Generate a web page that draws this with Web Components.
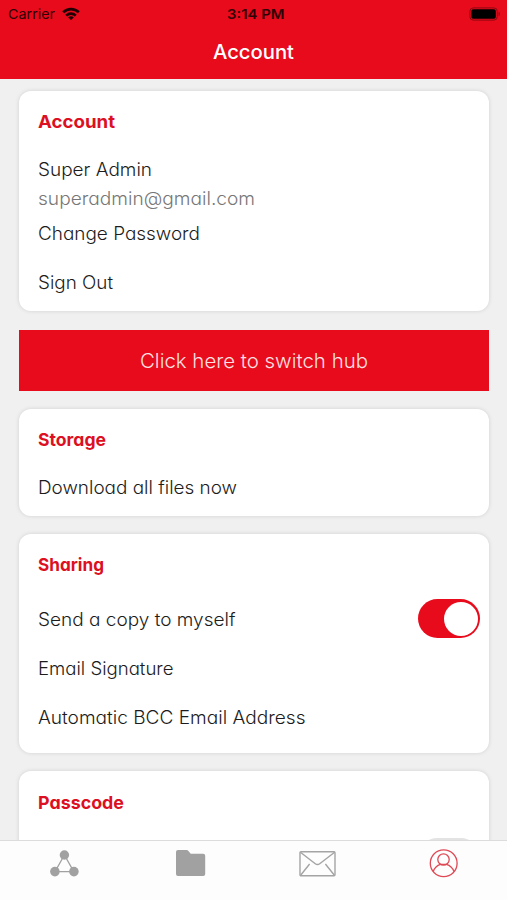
<!DOCTYPE html>
<html lang="en">

<head>
  <meta charset="UTF-8">
  <meta name="viewport" content="width=device-width, initial-scale=1.0">
  <title>Account</title>
  <style>
    body {
      margin: 0;
      overflow: hidden;
      font-family: Inter, "Liberation Sans", sans-serif;
    }
  </style>
</head>

<body>
  <template id="account-screen">
    <style>
      :host {
        --red: #e80b1c;
        display: flex;
        flex-direction: column;
        height: 900px;
        background: #f0f0f0;
      }
      main {
        flex: 1;
        min-height: 0;
        overflow: hidden;
        display: flex;
        flex-direction: column;
        gap: 18px;
        padding: 12px 18px 0 19px;
      }
    </style>
    <slot name="top"></slot>
    <main><slot></slot></main>
    <slot name="bottom"></slot>
  </template>

  <template id="nav-header">
    <style>
      :host {
        display: block;
        height: 79px;
        background: var(--red);
      }
      .status {
        display: grid;
        grid-template-columns: 1fr auto 1fr;
        align-items: center;
        height: 28px;
        padding: 0 7px 0 8px;
        font-size: 13.6px;
        color: #300006;
      }
      .left {
        display: flex;
        align-items: center;
        gap: 7px;
      }
      .time {
        font-weight: 600;
        margin-left: 3px;
      }
      .battery {
        justify-self: end;
        display: block;
      }
      .title {
        display: flex;
        justify-content: center;
        padding-top: 11px;
        color: #fff;
        font-size: 20px;
        font-weight: 500;
        line-height: 26px;
      }
    </style>
    <div class="status">
      <div class="left">
        <fit-text width="47">Carrier</fit-text>
        <svg width="18" height="14" viewBox="0 0 18 14" fill="none" stroke="#200004" stroke-width="2.7">
          <path d="M1.2 5.3a11.2 11.2 0 0 1 15.6 0M4.2 8.6a6.9 6.9 0 0 1 9.6 0" />
          <path d="M9 13 6.2 10.5a3.9 3.9 0 0 1 5.6 0z" fill="#200004" stroke="none" />
        </svg>
      </div>
      <fit-text class="time" width="57.5">3:14 PM</fit-text>
      <svg class="battery" width="31" height="14" viewBox="0 0 31 14">
        <rect x=".9" y=".9" width="27.4" height="12.2" rx="3.4" fill="none" stroke="#8d0711" />
        <rect x="2.4" y="2.3" width="24.4" height="9.4" rx="1.8" fill="#000" />
        <path d="M29.6 4.8c1.8.7 1.8 3.7 0 4.4z" fill="#8d0711" />
      </svg>
    </div>
    <div class="title"><fit-text width="81"><slot></slot></fit-text></div>
  </template>

  <template id="settings-card">
    <style>
      :host {
        display: block;
        flex: none;
        box-sizing: border-box;
        padding: 19px 9px 0 18.5px;
        border-radius: 12px;
        background: #fff;
        box-shadow: 0 0 4px rgba(0, 0, 0, .13);
      }
      .heading {
        display: flex;
        height: 23px;
        color: #dc1022;
        font-size: 18px;
        font-weight: 700;
        line-height: 24px;
      }
    </style>
    <div class="heading"><slot name="heading"></slot></div>
    <slot></slot>
  </template>

  <template id="settings-row">
    <style>
      :host {
        display: flex;
        align-items: center;
        color: #1c1c1c;
        font-size: 18.3px;
        font-weight: 300;
        line-height: 24px;
      }
      :host([muted]) {
        color: #777;
      }
      ::slotted([slot="control"]) {
        margin-left: auto;
      }
    </style>
    <slot></slot>
    <slot name="control"></slot>
  </template>

  <template id="toggle-switch">
    <style>
      :host {
        display: flex;
        box-sizing: border-box;
        width: 62px;
        height: 39px;
        padding: 2.5px;
        border-radius: 20px;
        background: #e3e3e3;
      }
      :host([on]) {
        justify-content: flex-end;
        background: var(--red);
      }
      i {
        width: 34px;
        height: 34px;
        border-radius: 50%;
        background: #fff;
      }
    </style>
    <i></i>
  </template>

  <template id="hub-button">
    <style>
      :host {
        display: flex;
        align-items: center;
        justify-content: center;
        flex: none;
        box-sizing: border-box;
        height: 61px;
        margin-top: 1px;
        padding-top: 1px;
        background: var(--red);
        color: #ffe0e2;
        font-size: 19.6px;
        font-weight: 300;
      }
    </style>
    <slot></slot>
  </template>

  <template id="tab-bar">
    <style>
      :host {
        display: grid;
        grid-template-columns: repeat(4, 1fr);
        box-sizing: border-box;
        height: 60px;
        padding-top: 6px;
        border-top: 1px solid #dcdcdc;
        background: #fdfdfd;
      }
      svg {
        display: block;
        margin: 0 auto;
      }
    </style>
    <svg width="38" height="32" viewBox="0 0 38 32" fill="#a1a1a1">
      <path d="M20.4 8 11 24.6h18.8z" fill="none" stroke="#a1a1a1" stroke-width="1.3" />
      <circle cx="20.4" cy="8" r="4.7" />
      <circle cx="10.9" cy="24.6" r="4.8" />
      <circle cx="29.9" cy="24.6" r="4.8" />
    </svg>
    <svg width="38" height="32" viewBox="0 0 38 32" fill="#a1a1a1">
      <path d="M7 3h8.7q1 0 1.7.9L19.7 6.8H32.2q2 0 2 2V27q0 2-2 2H7q-2 0-2-2V5q0-2 2-2z" />
    </svg>
    <svg width="38" height="32" viewBox="0 0 38 32" fill="none" stroke="#a4a4a4" stroke-width="1.4">
      <rect x="2" y="4.7" width="35" height="24" rx="1" />
      <path d="M2.4 5.2 17.3 16.7q2.2 1.7 4.4 0L36.6 5.2M2.6 28.2l9-11.2M36.4 28.2l-9-11.2" />
    </svg>
    <svg width="38" height="32" viewBox="0 0 38 32" fill="none" stroke="#df4855" stroke-width="1.3">
      <circle cx="18.7" cy="16.2" r="13.4" />
      <circle cx="18.5" cy="12.5" r="5.7" />
      <path d="M8.2 24.6c1.3-3.6 3.9-6.2 7.3-7.2h6c3.5 1 6.2 3.8 7.5 7.2" />
    </svg>
  </template>

  <account-screen>
    <nav-header slot="top">Account</nav-header>

    <settings-card style="height: 220px">
      <fit-text slot="heading" width="77">Account</fit-text>
      <settings-row style="margin-top: 24px"><fit-text width="114">Super Admin</fit-text></settings-row>
      <settings-row muted style="margin-top: 5px"><fit-text width="217">superadmin@gmail.com</fit-text></settings-row>
      <settings-row style="margin-top: 11px"><fit-text width="162">Change Password</fit-text></settings-row>
      <settings-row style="margin-top: 25px"><fit-text width="75">Sign Out</fit-text></settings-row>
    </settings-card>

    <hub-button><fit-text width="228">Click here to switch hub</fit-text></hub-button>

    <settings-card style="height: 107px">
      <fit-text slot="heading" width="68">Storage</fit-text>
      <settings-row style="margin-top: 24px"><fit-text width="199">Download all files now</fit-text></settings-row>
    </settings-card>

    <settings-card style="height: 219px">
      <fit-text slot="heading" width="66">Sharing</fit-text>
      <settings-row style="margin-top: 23px">
        <fit-text width="197.5">Send a copy to myself</fit-text>
        <toggle-switch slot="control" on></toggle-switch>
      </settings-row>
      <settings-row style="margin-top: 18px"><fit-text width="135.5">Email Signature</fit-text></settings-row>
      <settings-row style="margin-top: 25px"><fit-text width="267.5">Automatic BCC Email Address</fit-text></settings-row>
    </settings-card>

    <settings-card style="height: 200px; padding-top: 20px">
      <fit-text slot="heading" width="86">Passcode</fit-text>
      <settings-row style="margin-top: 24px">
        <toggle-switch slot="control"></toggle-switch>
      </settings-row>
    </settings-card>

    <tab-bar slot="bottom"></tab-bar>
  </account-screen>

  <script>
    // elements that only need their template stamped into a shadow root
    const names = ["account-screen", "nav-header", "settings-card", "settings-row", "toggle-switch", "hub-button", "tab-bar"]

    for (const name of names) {
      customElements.define(
        name,
        class extends HTMLElement {
          constructor() {
            super()
            const template = document.getElementById(name)
            this.attachShadow({ mode: "open" }).appendChild(template.content.cloneNode(true))
          }
        },
      )
    }

    // <fit-text width="..."> stretches its label so that it takes up the given width
    customElements.define(
      "fit-text",
      class extends HTMLElement {
        constructor() {
          super()
          this.attachShadow({ mode: "open" }).innerHTML = `
            <style>
              :host { display: block; white-space: nowrap; }
              span { display: inline-block; transform-origin: left; }
              :host-context(settings-card), :host-context(hub-button) {
                font-feature-settings: "cv11";
              }
            </style>
            <span><slot></slot></span>`
        }

        connectedCallback() {
          requestAnimationFrame(() => this.fit())
        }

        fit() {
          const span = this.shadowRoot.querySelector("span")
          const width = this.getAttribute("width")
          const scale = width / span.getBoundingClientRect().width
          this.style.width = `${width}px`
          span.style.transform = `scaleX(${scale})`
        }
      },
    )
  </script>
</body>

</html>
